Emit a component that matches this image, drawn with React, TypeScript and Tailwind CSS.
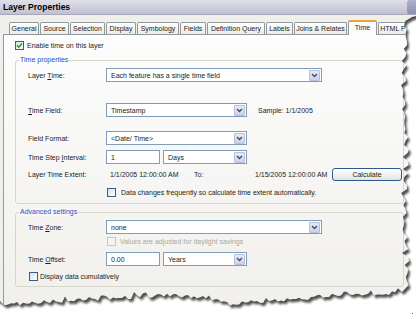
import React from 'react';

const tabs = [
  { label: 'General', w: 'w-[30px]' },
  { label: 'Source', w: 'w-[29px]' },
  { label: 'Selection', w: 'w-[35px]' },
  { label: 'Display', w: 'w-[30px]' },
  { label: 'Symbology', w: 'w-[42px]' },
  { label: 'Fields', w: 'w-[26px]' },
  { label: 'Definition Query', w: 'w-[58px]' },
  { label: 'Labels', w: 'w-[27px]' },
  { label: 'Joins & Relates', w: 'w-[53px]' },
  { label: 'Time', w: 'w-[29px]', active: true },
  { label: 'HTML P', w: 'w-[30px]' },
];

function Chevron() {
  return (
    <svg width="7" height="5" viewBox="0 0 7 5">
      <path d="M1 1l2.5 2.5L6 1" fill="none" stroke="#3d4d6e" strokeWidth="1.4" />
    </svg>
  );
}

function Select({ value, width }: { value: string; width: string }) {
  return (
    <div className={`flex h-[14px] items-center justify-between border border-[#7f9db9] bg-white pl-[4px] pr-[1px] ${width}`}>
      <span>{value}</span>
      <span className="flex h-[11px] w-[11px] items-center justify-center rounded-[1px] border border-[#b7bfd9] bg-gradient-to-b from-[#e8eaf4] to-[#cdd2e8]">
        <Chevron />
      </span>
    </div>
  );
}

function Input({ value }: { value: string }) {
  return (
    <div className="flex h-[14px] w-[54px] items-center border border-[#7f9db9] bg-white pl-[4px]">
      {value}
    </div>
  );
}

function Checkbox({ checked, disabled }: { checked?: boolean; disabled?: boolean }) {
  return (
    <span
      className={`flex h-[9px] w-[9px] shrink-0 items-center justify-center border ${
        disabled ? 'border-[#cac8bb] bg-[#f6f5f1]' : 'border-[#3a5f86] bg-gradient-to-br from-[#dedfe0] to-white'
      }`}
    >
      {checked && (
        <svg width="7" height="7" viewBox="0 0 7 7">
          <path d="M1 3.4l1.8 1.8L6 1.4" fill="none" stroke="#21a121" strokeWidth="1.5" />
        </svg>
      )}
    </span>
  );
}

function Label({ children }: { children: React.ReactNode }) {
  return <span className="w-[78px] shrink-0">{children}</span>;
}

function GroupBox({ title, titleBg, className, children }: { title: string; titleBg: string; className: string; children: React.ReactNode }) {
  return (
    <div className={`relative ml-[11px] mr-[5px] rounded-[3px] border border-[#d6d6ca] pl-[12px] ${className}`}>
      <span className={`absolute left-[3px] top-[-5px] px-[1px] leading-[8px] text-[#1f4fc8] ${titleBg}`}>{title}</span>
      {children}
    </div>
  );
}

// torn paper edge along the right and bottom
const bottomAnchors: [number, number][] = [
  [-4, 304], [40, 303], [80, 300], [120, 298], [160, 295], [200, 297], [230, 304],
  [270, 301], [310, 298], [350, 293], [380, 296], [400, 291],
];

function baseY(x: number) {
  for (let i = 0; i < bottomAnchors.length - 1; i++) {
    const [x0, y0] = bottomAnchors[i];
    const [x1, y1] = bottomAnchors[i + 1];
    if (x >= x0 && x <= x1) return y0 + ((y1 - y0) * (x - x0)) / (x1 - x0);
  }
  return 300;
}

function TornEdge() {
  let s = 11;
  const rnd = () => {
    s = (s * 16807) % 2147483647;
    return s / 2147483647;
  };
  const pts: string[] = ['-5,-5', '421,-5', '421,15', '412,17'];
  for (let y = 21; y <= 286; y += 4) {
    const tooth = y % 12 === 1 ? -3 : 0;
    const x = 406 + Math.sin(y / 19) * 1.5 + (rnd() - 0.5) * 4 + tooth;
    pts.push(`${x.toFixed(1)},${y}`);
  }
  pts.push('402,292');
  for (let x = 398; x >= -4; x -= 3) {
    const spike = rnd() > 0.85 ? -3 : 0;
    const y = baseY(x) + (rnd() - 0.5) * 4 + spike;
    pts.push(`${x},${y.toFixed(1)}`);
  }
  pts.push('-5,304');
  const poly = 'M' + pts.join(' L') + ' Z';
  const outside = `M-20,-20 H440 V340 H-20 Z ${poly}`;

  return (
    <svg className="pointer-events-none absolute left-0 top-0" width="416" height="319" viewBox="0 0 416 319">
      <defs>
        <clipPath id="out">
          <path d={outside} clipRule="evenodd" />
        </clipPath>
        <filter id="blur" x="-5%" y="-5%" width="110%" height="110%">
          <feGaussianBlur stdDeviation="1.2" />
        </filter>
      </defs>
      <path d={outside} fill="#ffffff" fillRule="evenodd" />
      <g clipPath="url(#out)">
        <path d={poly} fill="#333333" opacity="0.85" transform="translate(2 3)" filter="url(#blur)" />
      </g>
      <rect x="412" y="313" width="1" height="1" fill="#555" />
    </svg>
  );
}

export default function App() {
  return (
    <div className="relative h-[319px] w-[416px] overflow-hidden bg-white font-['Liberation_Sans',sans-serif] text-[7px] leading-none text-[#1c1c1c]">
      <div className="flex h-[319px] flex-col bg-[#efefeb]">
        {/* Title bar */}
        <div className="flex h-[15px] items-center border-b border-[#a8a8b8] bg-gradient-to-b from-[#e0e0ea] to-[#c0c0d2] pl-[3px]">
          <span className="text-[8.5px] font-bold text-black">Layer Properties</span>
          <span className="ml-auto h-[14px] w-[9px] rounded-l-[3px] bg-gradient-to-b from-[#aeb2cc] to-[#8c90ad]" />
        </div>

        {/* Tabs */}
        <div className="flex h-[19px] items-end gap-[1px] pl-[9px]">
          {tabs.map((t) =>
            t.active ? (
              <div
                key={t.label}
                className={`relative z-10 -mb-px flex h-[15px] shrink-0 items-center justify-center rounded-t-[2px] border-x border-t-2 border-x-[#919b9c] border-t-[#f0a030] bg-[#fcfcfe] pb-[2px] ${t.w}`}
              >
                {t.label}
              </div>
            ) : (
              <div
                key={t.label}
                className={`flex h-[12px] shrink-0 items-center justify-center whitespace-nowrap rounded-t-[2px] border-x border-t border-[#919b9c] bg-gradient-to-b from-white to-[#ecebe6] ${t.w}`}
              >
                {t.label}
              </div>
            )
          )}
        </div>

        {/* Tab panel */}
        <div className="ml-[3px] flex w-[407px] flex-1 flex-col border border-[#919b9c] bg-gradient-to-b from-[#fdfdfd] to-[#f0efeb]">
          <div className="mt-[6px] flex h-[9px] items-center gap-[3px] pl-[11px]">
            <Checkbox checked />
            <span>Enable time on this layer</span>
          </div>

          <GroupBox title="Time properties" titleBg="bg-[#fcfcfc]" className="mt-[10px] pb-[6px]">
            <div className="mt-[7px] flex h-[14px] items-center">
              <Label>
                Layer <u>T</u>ime:
              </Label>
              <Select value="Each feature has a single time field" width="w-[216px]" />
            </div>
            <div className="mt-[21px] flex h-[14px] items-center">
              <Label>
                <u>T</u>ime Field:
              </Label>
              <Select value="Timestamp" width="w-[141px]" />
              <span className="ml-[11px]">Sample: 1/1/2005</span>
            </div>
            <div className="mt-[14px] flex h-[14px] items-center">
              <Label>Field Format:</Label>
              <Select value="<Date/ Time>" width="w-[141px]" />
            </div>
            <div className="mt-[5px] flex h-[14px] items-center">
              <Label>
                Time Step <u>I</u>nterval:
              </Label>
              <Input value="1" />
              <span className="ml-[3px]">
                <Select value="Days" width="w-[84px]" />
              </span>
            </div>
            <div className="mt-[4px] flex h-[13px] items-center">
              <Label>Layer Time Extent:</Label>
              <span className="w-[88px] pl-[4px]">1/1/2005 12:00:00 AM</span>
              <span className="w-[61px]">To:</span>
              <span className="w-[77px]">1/15/2005 12:00:00 AM</span>
              <span className="flex h-[13px] w-[70px] items-center justify-center rounded-[3px] border border-[#2d5a8c] bg-gradient-to-b from-white to-[#e4e4de]">
                Calculate
              </span>
            </div>
            <div className="mt-[7px] flex h-[9px] items-center gap-[5px] pl-[79px]">
              <Checkbox />
              <span>Data changes frequently so calculate time extent automatically.</span>
            </div>
          </GroupBox>

          <GroupBox title="Advanced settings" titleBg="bg-[#f7f7f5]" className="mt-[8px] pb-[5px]">
            <div className="mt-[7px] flex h-[14px] items-center">
              <Label>
                Time <u>Z</u>one:
              </Label>
              <Select value="none" width="w-[216px]" />
            </div>
            <div className="mt-[3px] flex h-[9px] items-center gap-[4px] pl-[79px] text-[#aca899]">
              <Checkbox disabled />
              <span>Values are adjusted for daylight savings</span>
            </div>
            <div className="mt-[6px] flex h-[14px] items-center">
              <Label>
                Time <u>O</u>ffset:
              </Label>
              <Input value="0.00" />
              <span className="ml-[3px]">
                <Select value="Years" width="w-[84px]" />
              </span>
            </div>
            <div className="mt-[6px] flex h-[9px] items-center gap-[2px] pl-[1px]">
              <Checkbox />
              <span>Display data cumulatively</span>
            </div>
          </GroupBox>
        </div>
      </div>
      <TornEdge />
    </div>
  );
}
